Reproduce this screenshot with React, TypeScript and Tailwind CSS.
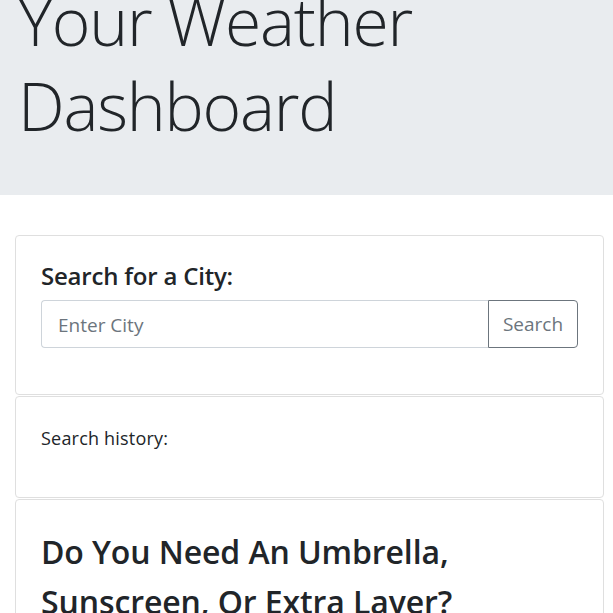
import React from 'react';

const font = { fontFamily: '"Open Sans", "Noto Sans", sans-serif' };

export default function App() {
    return (
        <div className="min-h-screen bg-white text-[#212529]" style={font}>
            {/* Jumbotron */}
            <header className="h-[195px] overflow-hidden bg-[#e9ecef] px-[18px]">
                <h1 className="mt-[-22px] text-[66px] font-light leading-[85px] tracking-[-1.2px]">
                    Your Weather Dashboard
                </h1>
            </header>

            <main className="ml-[15px] mr-[9px] mt-[40px]">
                {/* Search card */}
                <section className="h-[160px] rounded border border-[#dfdfdf] px-[25px] pt-[22px]">
                    <h4 className="text-[24px] font-semibold leading-[36px] tracking-[-0.2px]">Search for a City:</h4>
                    <div className="mt-[6px] flex h-[48px]">
                        <input
                            type="text"
                            placeholder="Enter City"
                            className="min-w-0 flex-1 rounded-l border border-r-0 border-[#ced4da] px-[16px] pt-[3px] text-[19px] outline-none placeholder:text-[#6c757d]"
                        />
                        <button className="w-[90px] rounded-r border border-[#6c757d] pt-[1px] text-[19px] text-[#6c757d]">
                            Search
                        </button>
                    </div>
                </section>

                {/* History card */}
                <section className="mt-px h-[102px] rounded border border-[#dfdfdf] px-[25px] pt-[28px]">
                    <p className="text-[18px] leading-[26px] tracking-[0.2px]">Search history:</p>
                </section>

                {/* Tips card */}
                <section className="mt-px rounded border border-[#dfdfdf] px-[25px] pt-[27px] pb-6">
                    <h1 className="text-[32px] font-semibold leading-[50px] tracking-[-0.1px]">
                        Do You Need An Umbrella, Sunscreen, Or Extra Layer?
                    </h1>
                </section>
            </main>
        </div>
    );
}
